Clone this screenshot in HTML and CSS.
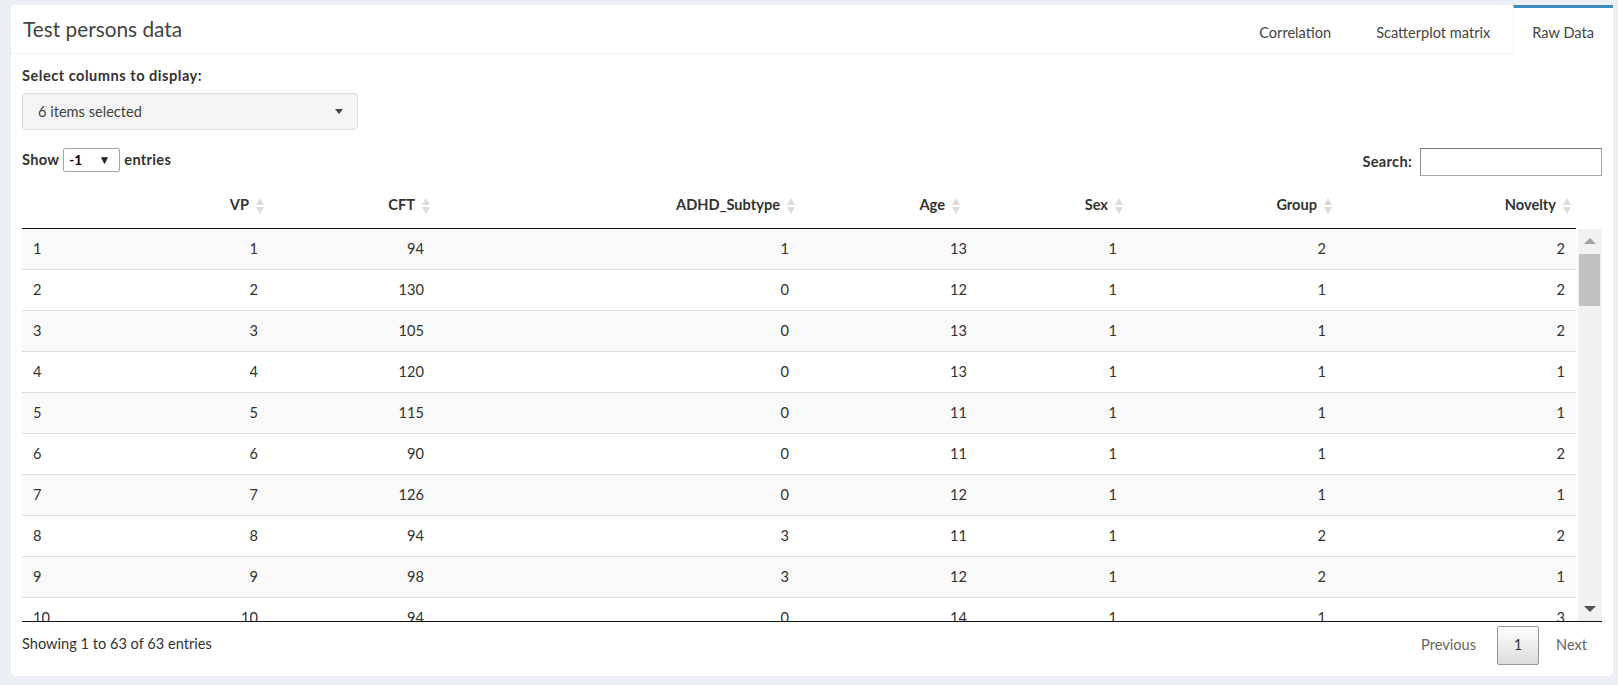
FILE: index.html
```html
<!DOCTYPE html>
<html>
<head>
<meta charset="utf-8">
<link rel="stylesheet" href="styles.css">
</head>
<body>
<div class="box">
  <div class="box-head">
    <h3 class="title">Test persons data</h3>
    <ul class="tabs">
      <li class="tab">Correlation</li>
      <li class="tab">Scatterplot matrix</li>
      <li class="tab active">Raw Data</li>
    </ul>
  </div>
  <div class="box-body">
    <div class="form-group">
      <div class="label">Select columns to display:</div>
      <div class="picker"><span>6 items selected</span><span class="caret"></span></div>
    </div>
    <div class="dt-top">
      <div class="length"><span>Show</span><div class="len-select"><span>-1</span><span class="len-arrow">▼</span></div><span>entries</span></div>
      <div class="search"><span>Search:</span><div class="search-input"></div></div>
    </div>
    <div class="dt-head">
      <table class="grid">
        <colgroup><col class="c0"><col class="c1"><col class="c2"><col class="c3"><col class="c4"><col class="c5"><col class="c6"><col class="c7"></colgroup>
        <thead>
          <tr><th class="first"></th><th class="sort">VP</th><th class="sort">CFT</th><th class="sort">ADHD_Subtype</th><th class="sort age">Age</th><th class="sort">Sex</th><th class="sort">Group</th><th class="sort">Novelty</th></tr>
        </thead>
      </table>
    </div>
    <div class="dt-scroll">
      <div class="dt-body">
        <table class="grid">
          <colgroup><col class="c0"><col class="c1"><col class="c2"><col class="c3"><col class="c4"><col class="c5"><col class="c6"><col class="c7"></colgroup>
          <tbody>
            <tr class="odd"><td>1</td><td>1</td><td>94</td><td>1</td><td>13</td><td>1</td><td>2</td><td>2</td></tr>
            <tr><td>2</td><td>2</td><td>130</td><td>0</td><td>12</td><td>1</td><td>1</td><td>2</td></tr>
            <tr class="odd"><td>3</td><td>3</td><td>105</td><td>0</td><td>13</td><td>1</td><td>1</td><td>2</td></tr>
            <tr><td>4</td><td>4</td><td>120</td><td>0</td><td>13</td><td>1</td><td>1</td><td>1</td></tr>
            <tr class="odd"><td>5</td><td>5</td><td>115</td><td>0</td><td>11</td><td>1</td><td>1</td><td>1</td></tr>
            <tr><td>6</td><td>6</td><td>90</td><td>0</td><td>11</td><td>1</td><td>1</td><td>2</td></tr>
            <tr class="odd"><td>7</td><td>7</td><td>126</td><td>0</td><td>12</td><td>1</td><td>1</td><td>1</td></tr>
            <tr><td>8</td><td>8</td><td>94</td><td>3</td><td>11</td><td>1</td><td>2</td><td>2</td></tr>
            <tr class="odd"><td>9</td><td>9</td><td>98</td><td>3</td><td>12</td><td>1</td><td>2</td><td>1</td></tr>
            <tr><td>10</td><td>10</td><td>94</td><td>0</td><td>14</td><td>1</td><td>1</td><td>3</td></tr>
            <tr class="odd"><td>11</td><td>11</td><td>110</td><td>0</td><td>12</td><td>1</td><td>1</td><td>2</td></tr>
          </tbody>
        </table>
      </div>
      <div class="vscroll">
        <div class="vs-btn"><span class="vs-up"></span></div>
        <div class="vs-track"><div class="vs-thumb"></div></div>
        <div class="vs-btn"><span class="vs-down"></span></div>
      </div>
    </div>
    <div class="dt-foot">
      <div class="info">Showing 1 to 63 of 63 entries</div>
      <div class="paging"><span class="pg-link">Previous</span><span class="pg-btn">1</span><span class="pg-link">Next</span></div>
    </div>
  </div>
</div>
</body>
</html>
```
FILE: styles.css
```css
* { box-sizing: border-box; }
html, body { margin: 0; padding: 0; }
body {
  background: #ecf0f5;
  font-family: "Lato", "Liberation Sans", sans-serif;
  font-size: 14.6px;
  line-height: 22px;
  color: #333;
  padding: 5px 5px 0 11px;
}
.box {
  width: 1602px;
  height: 671px;
  background: #fff;
  border-radius: 3px;
  box-shadow: 0 1px 1px rgba(0,0,0,0.1);
  display: flex;
  flex-direction: column;
}
.box-head {
  display: flex;
  justify-content: space-between;
  align-items: stretch;
  height: 49px;
  border-bottom: 1px solid #f4f4f4;
}
.title {
  margin: 0;
  padding: 0 0 0 12px;
  font-size: 20.8px;
  font-weight: 400;
  color: #444;
  line-height: 47px;
}
.tabs {
  list-style: none;
  margin: 0;
  padding: 0;
  display: flex;
  gap: 5px;
}
.tab {
  padding: 0 18px;
  color: #444;
  line-height: 50px;
  height: 49px;
  border-top: 3px solid transparent;
}
.tab:first-child { padding-right: 22px; }
.tab.active {
  border-top-color: #3c8dbc;
  border-left: 1px solid #f4f4f4;
  background: #fff;
  height: 49px;
  margin-bottom: -1px;
  padding: 0 19px 0 18px;
}
.box-body {
  padding: 11px;
  display: flex;
  flex-direction: column;
  flex: 1;
}
.form-group { margin-bottom: 18px; }
.label {
  font-weight: 700;
  margin-bottom: 6px;
  letter-spacing: 0.5px;
}
.picker {
  width: 336px;
  height: 37px;
  background: #f4f4f4;
  border: 1px solid #ddd;
  border-radius: 4px;
  display: flex;
  align-items: center;
  justify-content: space-between;
  padding: 0 14px 0 15px;
  color: #444;
}
.caret {
  width: 0; height: 0;
  border-left: 4.5px solid transparent;
  border-right: 4.5px solid transparent;
  border-top: 5px solid #444;
}
.dt-top {
  display: flex;
  justify-content: space-between;
  align-items: flex-start;
  height: 28px;
  margin-bottom: 7px;
}
.length {
  display: flex;
  align-items: center;
  gap: 4px;
  font-weight: 700;
  height: 24px;
  letter-spacing: 0.3px;
}
.len-select {
  width: 57px;
  height: 24px;
  border: 1px solid #a6a6a6;
  border-radius: 2px;
  display: flex;
  align-items: center;
  justify-content: space-between;
  padding: 0 9px 0 5px;
  font-size: 13.5px;
  color: #000;
  letter-spacing: 0;
}
.len-arrow { font-size: 12px; color: #222; line-height: 12px; }
.search {
  display: flex;
  align-items: center;
  gap: 8px;
  font-weight: 700;
  letter-spacing: 0.3px;
}
.search-input {
  width: 182px;
  height: 28px;
  border: 1px solid #a9a9a9;
  border-top-color: #767676;
  border-left-color: #8f8f8f;
  background: #fff;
}
.dt-head { padding-right: 26px; }
.grid {
  width: 1554px;
  border-collapse: collapse;
  table-layout: fixed;
}
.c0 { width: 128px; }
.c1 { width: 119px; }
.c2 { width: 166px; }
.c3 { width: 365px; }
.c4 { width: 178px; }
.c5 { width: 150px; }
.c6 { width: 209px; }
.c7 { width: 239px; }
th {
  text-align: right;
  font-weight: 700;
  padding: 11px 20px;
  border-bottom: 1px solid #111;
  position: relative;
  height: 45px;
}
th.age { padding-right: 33px; }
th.sort::before, th.sort::after {
  content: "";
  position: absolute;
  right: 5px;
  width: 0; height: 0;
  border-left: 4.5px solid transparent;
  border-right: 4.5px solid transparent;
}
th.age::before, th.age::after { right: 18px; }
th.sort::before { top: 15px; border-bottom: 7px solid #dcdcdc; }
th.sort::after { top: 24px; border-top: 7px solid #dcdcdc; }
td {
  text-align: right;
  padding: 9px 11px;
  border-top: 1px solid #ddd;
  height: 40.6px;
  white-space: nowrap;
  color: #333;
}
td:first-child { text-align: left; }
tbody tr:first-child td { border-top: none; height: 39.6px; }
tr.odd td { background: #f9f9f9; }
.dt-scroll {
  display: flex;
  height: 393px;
  border-bottom: 1px solid #111;
}
.dt-body {
  width: 1556px;
  height: 392px;
  overflow: hidden;
}
.vscroll {
  width: 24px;
  height: 392px;
  background: #f1f1f1;
  display: flex;
  flex-direction: column;
  padding: 0 2px 0 1px;
}
.vs-btn {
  height: 24px;
  display: flex;
  align-items: center;
  justify-content: center;
  flex: none;
}
.vs-up {
  width: 0; height: 0;
  border-left: 6px solid transparent;
  border-right: 6px solid transparent;
  border-bottom: 6px solid #a3a3a3;
}
.vs-down {
  width: 0; height: 0;
  border-left: 6px solid transparent;
  border-right: 6px solid transparent;
  border-top: 6px solid #505050;
}
.vs-track { flex: 1; padding-top: 1px; }
.vs-thumb {
  height: 52px;
  background: #c1c1c1;
}
.dt-foot {
  display: flex;
  justify-content: space-between;
  align-items: flex-start;
}
.info {
  padding-top: 11px;
  color: #333;
}
.paging {
  display: flex;
  align-items: center;
  padding-top: 4px;
}
.pg-link {
  padding: 8px 15px;
  margin-left: 2px;
  color: #666;
  line-height: 22px;
}
.pg-link:first-child { padding-right: 19px; }
.pg-btn {
  margin-left: 2px;
  width: 42px;
  height: 39px;
  display: flex;
  align-items: center;
  justify-content: center;
  border: 1px solid #979797;
  border-radius: 2px;
  background: linear-gradient(to bottom, #fff 0%, #dcdcdc 100%);
  color: #333;
}
```
